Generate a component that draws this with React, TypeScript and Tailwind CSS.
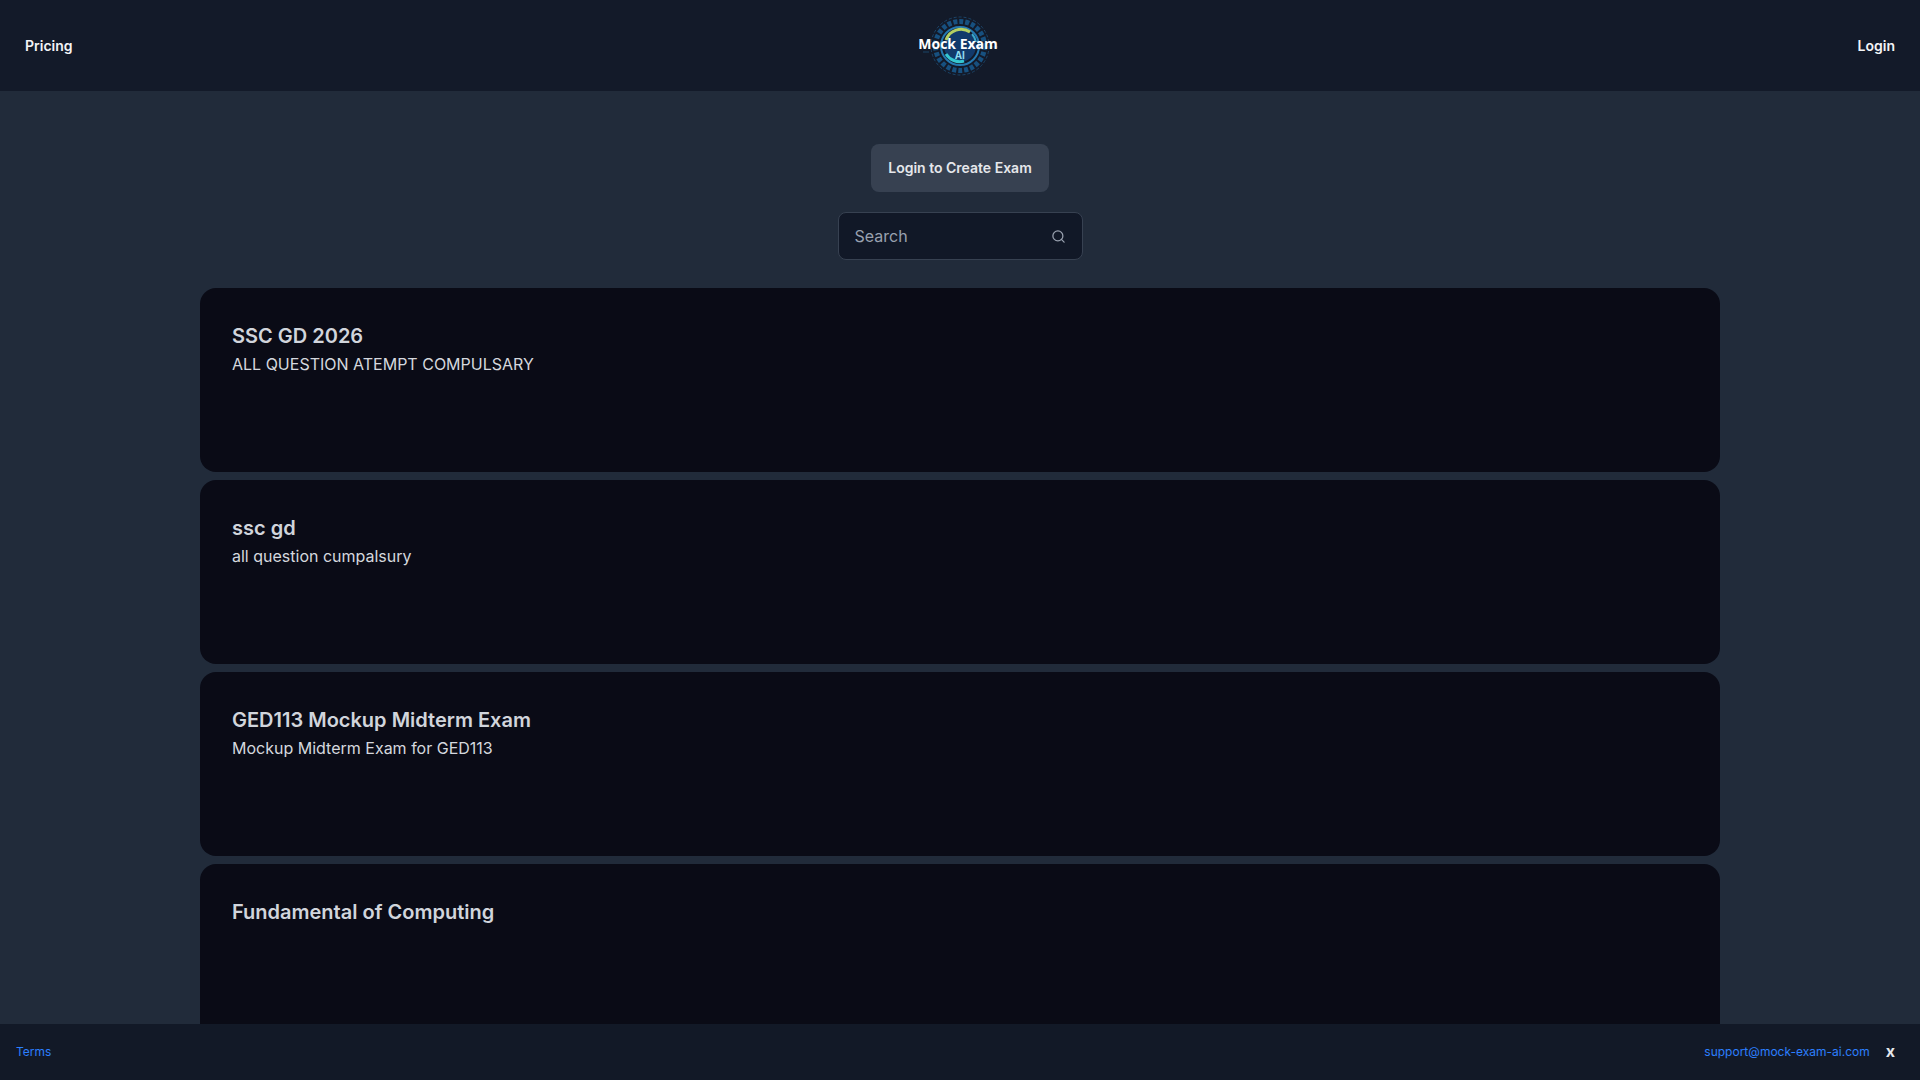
import { Search } from 'lucide-react'

const exams = [
  { title: 'SSC GD 2026', description: 'ALL QUESTION ATEMPT COMPULSARY' },
  { title: 'ssc gd', description: 'all question cumpalsury' },
  { title: 'GED113 Mockup Midterm Exam', description: 'Mockup Midterm Exam for GED113' },
  { title: 'Fundamental of Computing', description: '' },
]

function Logo() {
  return (
    <div className="relative mr-[10px] w-[80px] h-[64px] flex flex-col items-center justify-center">
      <svg viewBox="0 0 80 64" className="absolute inset-0 w-[80px] h-[64px]" fill="none">
        <circle cx="40" cy="32" r="29" stroke="#1b4468" strokeWidth="1" strokeDasharray="3 2" />
        <circle cx="40" cy="32" r="24.5" stroke="#17507f" strokeWidth="5" strokeDasharray="4 2" />
        <circle cx="40" cy="32" r="19" stroke="#2478b0" strokeWidth="2" />
        <circle cx="40" cy="32" r="16" fill="#123a6b" />
        <path d="M26 26 A16 16 0 0 1 50 18" stroke="#b4cf62" strokeWidth="3" />
        <path d="M26 40 A16 16 0 0 0 44 47" stroke="#35c6d0" strokeWidth="3" />
        <path d="M52 20 A17 17 0 0 1 56 28" stroke="#3aa7c9" strokeWidth="2" />
        <path d="M66 33h12M3 38h6" stroke="#1b4468" strokeWidth="1" />
      </svg>
      <span className="relative font-['Open_Sans',sans-serif] text-[14px] leading-[13px] font-bold text-white -ml-[4px] mt-[6px]">Mock Exam</span>
      <span className="relative font-['Open_Sans',sans-serif] text-[10px] leading-[11px] font-bold text-[#8fdcf0]">AI</span>
    </div>
  )
}

export default function App() {
  return (
    <div className="h-screen overflow-hidden bg-[#212b3a] font-['Inter',sans-serif]">
      <header className="h-[91px] bg-[#131a29] flex items-center justify-between px-[25px]">
        <span className="text-sm font-semibold text-gray-100">Pricing</span>
        <Logo />
        <span className="text-sm font-semibold text-gray-100">Login</span>
      </header>

      <main className="flex flex-col items-center pt-[53px]">
        <button className="h-[48px] w-[178px] rounded-lg bg-[#374151] text-sm font-semibold text-gray-200">
          Login to Create Exam
        </button>

        <div className="mt-[20px] h-[48px] w-[245px] rounded-lg border border-[#374151] bg-[#111827] flex items-center justify-between pl-4 pr-4">
          <span className="text-base text-gray-400">Search</span>
          <Search className="w-[15px] h-[15px] text-gray-400" />
        </div>

        <div className="mt-[28px] w-[1520px] flex flex-col gap-2">
          {exams.map((exam) => (
            <div key={exam.title} className="h-[184px] rounded-2xl bg-[#0a0b16] px-8 pt-[34px]">
              <h2 className="mb-[2px] text-xl leading-7 font-semibold text-gray-300">{exam.title}</h2>
              <p className="text-base text-[#d5d8de]">{exam.description}</p>
            </div>
          ))}
        </div>
      </main>

      <footer className="fixed bottom-0 inset-x-0 h-[56px] bg-[#121927] flex items-center justify-between pl-4 pr-[25px]">
        <a className="text-xs text-blue-500">Terms</a>
        <div className="flex items-center gap-[16px]">
          <a className="text-xs text-blue-500">support@mock-exam-ai.com</a>
          <span className="-mt-[2px] text-base leading-none font-bold text-gray-200">x</span>
        </div>
      </footer>
    </div>
  )
}
